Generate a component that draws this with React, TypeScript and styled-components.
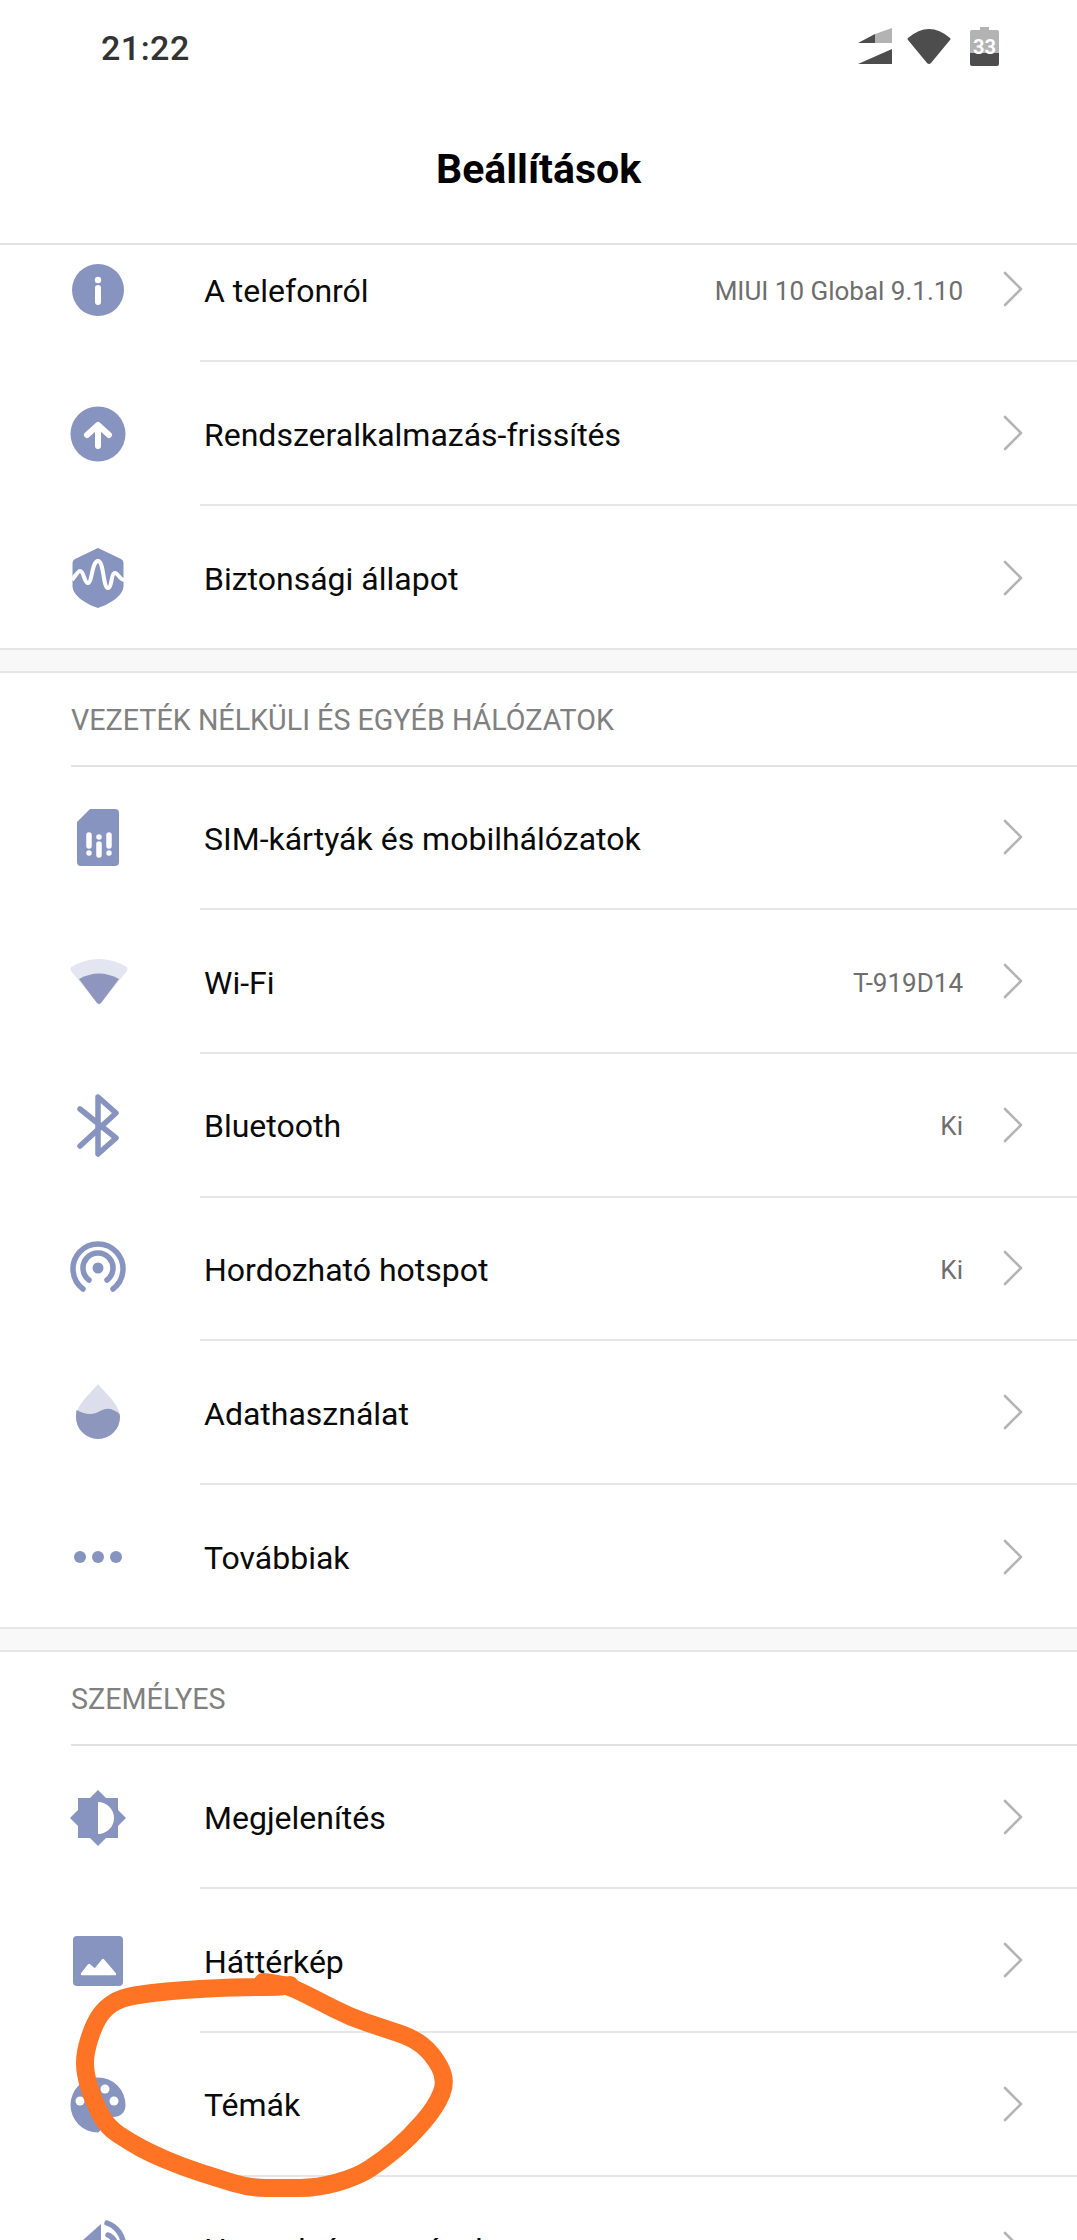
import React from 'react';
import styled, { createGlobalStyle } from 'styled-components';

const GlobalStyle = createGlobalStyle`
  html, body {
    margin: 0;
    padding: 0;
    background: #fff;
    font-family: Roboto, "Noto Sans", sans-serif;
  }
  *, *::before, *::after {
    box-sizing: border-box;
  }
`;

const ICON = '#8794bf';
const ICON_LIGHT = '#e3e6f0';

type IconProps = { children: React.ReactNode };

// every settings glyph is drawn around 0,0
function Glyph({ children }: IconProps) {
  return (
    <svg width="64" height="64" viewBox="-32 -32 64 64" fill="none">
      {children}
    </svg>
  );
}

const InfoIcon = () => (
  <Glyph>
    <circle r="26" fill={ICON} />
    <circle cy="-10" r="3.2" fill="#fff" />
    <path d="M0 -2V12" stroke="#fff" strokeWidth="6" strokeLinecap="round" />
  </Glyph>
);

const UpdateIcon = () => (
  <Glyph>
    <circle r="27.5" fill={ICON} />
    <path d="M0 12V-8M-11 1L0 -9L11 1" stroke="#fff" strokeWidth="6" strokeLinecap="round" strokeLinejoin="round" />
  </Glyph>
);

const ShieldIcon = () => (
  <Glyph>
    <path
      d="M0 -30L23 -19Q25.5 -18 25.5 -15V8C25.5 18 10 27 0 30C-10 27 -25.5 18 -25.5 8V-15Q-25.5 -18 -23 -19Z"
      fill={ICON}
    />
    <path
      d="M-26 2C-22 -3 -20 -7 -18 -7C-14 -7 -14 5 -10 5C-6 5 -6 -17 0 -17C6 -17 5 10 10 10C14 10 13 -5 17 -5C20 -5 22 2 26 2"
      stroke="#fff"
      strokeWidth="4"
    />
  </Glyph>
);

const SimIcon = () => (
  <Glyph>
    <path d="M-21 -16L-8 -29H17A4 4 0 0 1 21 -25V24A4 4 0 0 1 17 28H-17A4 4 0 0 1 -21 24Z" fill={ICON} />
    <path
      d="M-9 -3V8M-9 15V15.1M1 -1V-0.9M1 6V17M11 -3V8M11 15V15.1"
      stroke="#fff"
      strokeWidth="5.5"
      strokeLinecap="round"
    />
  </Glyph>
);

const WifiIcon = () => (
  <Glyph>
    <path d="M-27 -15Q1 -31 29 -15Q30 -13 29 -11L3 21Q1 23 -1 21L-27 -11Q-28 -13 -27 -15Z" fill={ICON_LIGHT} />
    <path d="M-19 -3Q1 -14 21 -3L3 21Q1 23 -1 21Z" fill="#8e96bf" />
  </Glyph>
);

const BluetoothIcon = () => (
  <Glyph>
    <path
      d="M-18 -17L18 12L0 28V-29L18 -13L-18 20"
      stroke={ICON}
      strokeWidth="5.5"
      strokeLinecap="round"
      strokeLinejoin="round"
    />
  </Glyph>
);

const HotspotIcon = () => (
  <Glyph>
    <circle cy="-1" r="5.5" fill={ICON} />
    <path
      d="M-15 20A25 25 0 1 1 15 20M-9 11A15 15 0 1 1 9 11"
      stroke={ICON}
      strokeWidth="5.5"
      strokeLinecap="round"
    />
  </Glyph>
);

const DataIcon = () => (
  <Glyph>
    <path d="M0 -29C-4 -23 -22 -9 -22 4A22 22 0 0 0 22 4C22 -9 4 -23 0 -29Z" fill="#dcdfeb" />
    <path d="M-21.5 -3C-14 1 -8 2 -2 0C4 -3 10 -6 15 -3Q20 -1 21.5 1Q22 2.5 22 4A22 22 0 0 1 -22 4Q-22 0 -21.5 -3Z" fill="#8d96bd" />
  </Glyph>
);

const MoreIcon = () => (
  <Glyph>
    <circle cx="-18" r="6" fill={ICON} />
    <circle r="6" fill={ICON} />
    <circle cx="18" r="6" fill={ICON} />
  </Glyph>
);

const DisplayIcon = () => (
  <Glyph>
    <path d="M-20 -20H20V20H-20Z" fill={ICON} />
    <path d="M0 -28L28 0L0 28L-28 0Z" fill={ICON} />
    <path d="M0 -16A16 16 0 0 1 0 16Z" fill="#fff" />
  </Glyph>
);

const WallpaperIcon = () => (
  <Glyph>
    <rect x="-25" y="-25" width="50" height="50" rx="4" fill={ICON} />
    <path
      d="M-16 13L-9 4L-3 9L5 -1L17 13Z"
      fill="#fff"
      stroke="#fff"
      strokeWidth="2.5"
      strokeLinejoin="round"
    />
  </Glyph>
);

const ThemeIcon = () => (
  <Glyph>
    <path d="M0 -27.5A27.5 27.5 0 0 1 27.5 0C27.5 8 22 12 15 12H8Q3 13 3 20Q3 27 0 27.5A27.5 27.5 0 0 1 0 -27.5Z" fill={ICON} />
    <circle cx="7" cy="-16" r="4.5" fill="#fff" />
    <circle cx="16" cy="-4" r="4.5" fill="#fff" />
    <circle cx="-18" cy="-4" r="4.5" fill="#fff" />
  </Glyph>
);

const SoundIcon = () => (
  <Glyph>
    <path d="M-27 -9H-15L3 -25V25L-15 9H-27Z" fill={ICON} />
    <path d="M9 -26C18 -23 26 -14 26 0M10 -14C15 -12 18 -7 18 0" stroke={ICON} strokeWidth="5.5" strokeLinecap="round" />
  </Glyph>
);

const Chevron = () => (
  <svg width="20" height="36" viewBox="0 0 20 36" fill="none">
    <path d="M2 2L18 18L2 34" stroke="#b4b4b4" strokeWidth="2.6" strokeLinecap="round" strokeLinejoin="round" />
  </svg>
);

type Item = { label: string; value?: string; icon: React.ComponentType };

const aboutItems: Item[] = [
  { label: 'A telefonról', value: 'MIUI 10 Global 9.1.10', icon: InfoIcon },
  { label: 'Rendszeralkalmazás-frissítés', icon: UpdateIcon },
  { label: 'Biztonsági állapot', icon: ShieldIcon },
];

const networkItems: Item[] = [
  { label: 'SIM-kártyák és mobilhálózatok', icon: SimIcon },
  { label: 'Wi-Fi', value: 'T-919D14', icon: WifiIcon },
  { label: 'Bluetooth', value: 'Ki', icon: BluetoothIcon },
  { label: 'Hordozható hotspot', value: 'Ki', icon: HotspotIcon },
  { label: 'Adathasználat', icon: DataIcon },
  { label: 'Továbbiak', icon: MoreIcon },
];

const personalItems: Item[] = [
  { label: 'Megjelenítés', icon: DisplayIcon },
  { label: 'Háttérkép', icon: WallpaperIcon },
  { label: 'Témák', icon: ThemeIcon },
  { label: 'Hangok és rezgések', icon: SoundIcon },
];

function SettingsRows({ items }: { items: Item[] }) {
  return (
    <>
      {items.map(({ label, value, icon: Icon }) => (
        <Styled.Row key={label}>
          <Styled.IconSlot>
            <Icon />
          </Styled.IconSlot>
          <Styled.RowBody>
            <Styled.Label>{label}</Styled.Label>
            {value && <Styled.Value>{value}</Styled.Value>}
            <Chevron />
          </Styled.RowBody>
        </Styled.Row>
      ))}
    </>
  );
}

// hand-drawn ring, smoothed through the midpoints of its points
const ringPoints = [
  [263, 1982], [280, 1984], [293, 1988], [317, 2000], [350, 2017], [383, 2028], [413, 2038], [432, 2053],
  [447, 2080], [436, 2107], [410, 2137], [383, 2160], [357, 2177], [317, 2188], [283, 2188], [250, 2188],
  [217, 2178], [183, 2167], [150, 2153], [130, 2142], [107, 2127], [93, 2100], [85, 2073], [85, 2053],
  [93, 2027], [103, 2010], [120, 1998], [150, 1993], [183, 1990], [217, 1988], [250, 1987], [280, 1987],
  [290, 1985],
];

function ringPath() {
  let d = `M${ringPoints[0][0]} ${ringPoints[0][1]}`;
  for (let i = 1; i < ringPoints.length - 1; i++) {
    const [x, y] = ringPoints[i];
    const [nx, ny] = ringPoints[i + 1];
    d += `Q${x} ${y} ${(x + nx) / 2} ${(y + ny) / 2}`;
  }
  const [lx, ly] = ringPoints[ringPoints.length - 1];
  return `${d}L${lx} ${ly}`;
}

export default function App() {
  return (
    <Styled.Page>
      <GlobalStyle />
      <Styled.StatusBar>
        <Styled.Time>21:22</Styled.Time>
        <Styled.StatusIcons>
          <svg width="34" height="36" viewBox="0 0 34 36">
            <path d="M0 15L17 6V15Z" fill="#4d4d4d" />
            <path d="M17 6L34 0V15H17Z" fill="#b3b3b3" />
            <path d="M0 36L34 21V36Z" fill="#4d4d4d" />
          </svg>
          <svg width="44" height="36" viewBox="0 0 44 36">
            <path d="M1 10Q22 -8 43 10Q44 11 43 12L24 35Q22 37 20 35L1 12Q0 11 1 10Z" fill="#4d4d4d" />
          </svg>
          <svg width="29" height="39" viewBox="0 0 29 39">
            <path d="M10 0H19V3H10Z" fill="#b3b3b3" />
            <path d="M2 3H27Q29 3 29 5V26H0V5Q0 3 2 3Z" fill="#b3b3b3" />
            <path d="M0 26H29V37Q29 39 27 39H2Q0 39 0 37Z" fill="#4d4d4d" />
            <text x="14.5" y="27" textAnchor="middle" fontFamily="Roboto, sans-serif" fontWeight="700" fontSize="20" fill="#fff">
              33
            </text>
          </svg>
        </Styled.StatusIcons>
      </Styled.StatusBar>
      <Styled.Nav>
        <Styled.Title>Beállítások</Styled.Title>
      </Styled.Nav>
      <Styled.List>
        <Styled.Section>
          <SettingsRows items={aboutItems} />
        </Styled.Section>
        <Styled.Gap />
        <Styled.SectionTitle>VEZETÉK NÉLKÜLI ÉS EGYÉB HÁLÓZATOK</Styled.SectionTitle>
        <Styled.Section>
          <SettingsRows items={networkItems} />
        </Styled.Section>
        <Styled.Gap />
        <Styled.SectionTitle>SZEMÉLYES</Styled.SectionTitle>
        <Styled.Section>
          <SettingsRows items={personalItems} />
        </Styled.Section>
      </Styled.List>
      <Styled.Ring viewBox="0 0 1077 2240" fill="none">
        <path d={ringPath()} stroke="#ff7324" strokeWidth="18" strokeLinecap="round" strokeLinejoin="round" />
      </Styled.Ring>
    </Styled.Page>
  );
}

const Styled = {
  Page: styled.div`
    position: relative;
    width: 1077px;
    height: 2240px;
    overflow: hidden;
    background: #fff;
  `,
  StatusBar: styled.header`
    display: flex;
    align-items: center;
    justify-content: space-between;
    height: 96px;
    padding: 0 78px 0 101px;
  `,
  Time: styled.span`
    font-size: 34px;
    font-weight: 500;
    color: #333;
    letter-spacing: 0.5px;
  `,
  StatusIcons: styled.div`
    display: flex;
    align-items: center;
    gap: 15px;
    margin-top: -4px;
    & > svg:last-child {
      margin-left: 4px;
    }
  `,
  Nav: styled.div`
    display: flex;
    align-items: center;
    justify-content: center;
    height: 149px;
    padding-bottom: 2px;
    border-bottom: 2px solid #e2e2e2;
  `,
  Title: styled.h1`
    margin: 0;
    font-size: 41px;
    font-weight: 700;
    color: #000;
  `,
  List: styled.main`
    height: 1995px;
    overflow: hidden;
    & > section:first-child {
      margin-top: -26.5px;
    }
  `,
  Section: styled.section`
    display: flex;
    flex-direction: column;
    margin-bottom: -2px;
    & > div:last-child > div {
      border-bottom: none;
    }
  `,
  Row: styled.div`
    display: flex;
    flex-shrink: 0;
    height: 143.7px;
  `,
  IconSlot: styled.div`
    display: flex;
    flex-shrink: 0;
    align-items: center;
    justify-content: center;
    width: 200px;
    & > svg {
      margin-right: 4px;
    }
  `,
  RowBody: styled.div`
    display: flex;
    flex: 1;
    align-items: center;
    padding: 0 54px 0 4px;
    border-bottom: 2px solid #e6e6e6;
  `,
  Label: styled.span`
    flex: 1;
    padding-top: 3px;
    font-size: 32px;
    color: #0a0a0a;
  `,
  Value: styled.span`
    margin-right: 40px;
    padding-top: 3px;
    font-size: 26px;
    color: #6e6e6e;
  `,
  Gap: styled.div`
    height: 25px;
    background: #f8f8f8;
    border-top: 2px solid #e6e6e6;
    border-bottom: 2px solid #e6e6e6;
  `,
  SectionTitle: styled.h2`
    display: flex;
    align-items: center;
    height: 94px;
    margin: 0 0 0 71px;
    padding-top: 2px;
    font-size: 28.7px;
    font-weight: 400;
    color: #808080;
    border-bottom: 2px solid #e2e2e2;
  `,
  Ring: styled.svg`
    position: absolute;
    inset: 0;
    width: 1077px;
    height: 2240px;
    pointer-events: none;
  `,
};
